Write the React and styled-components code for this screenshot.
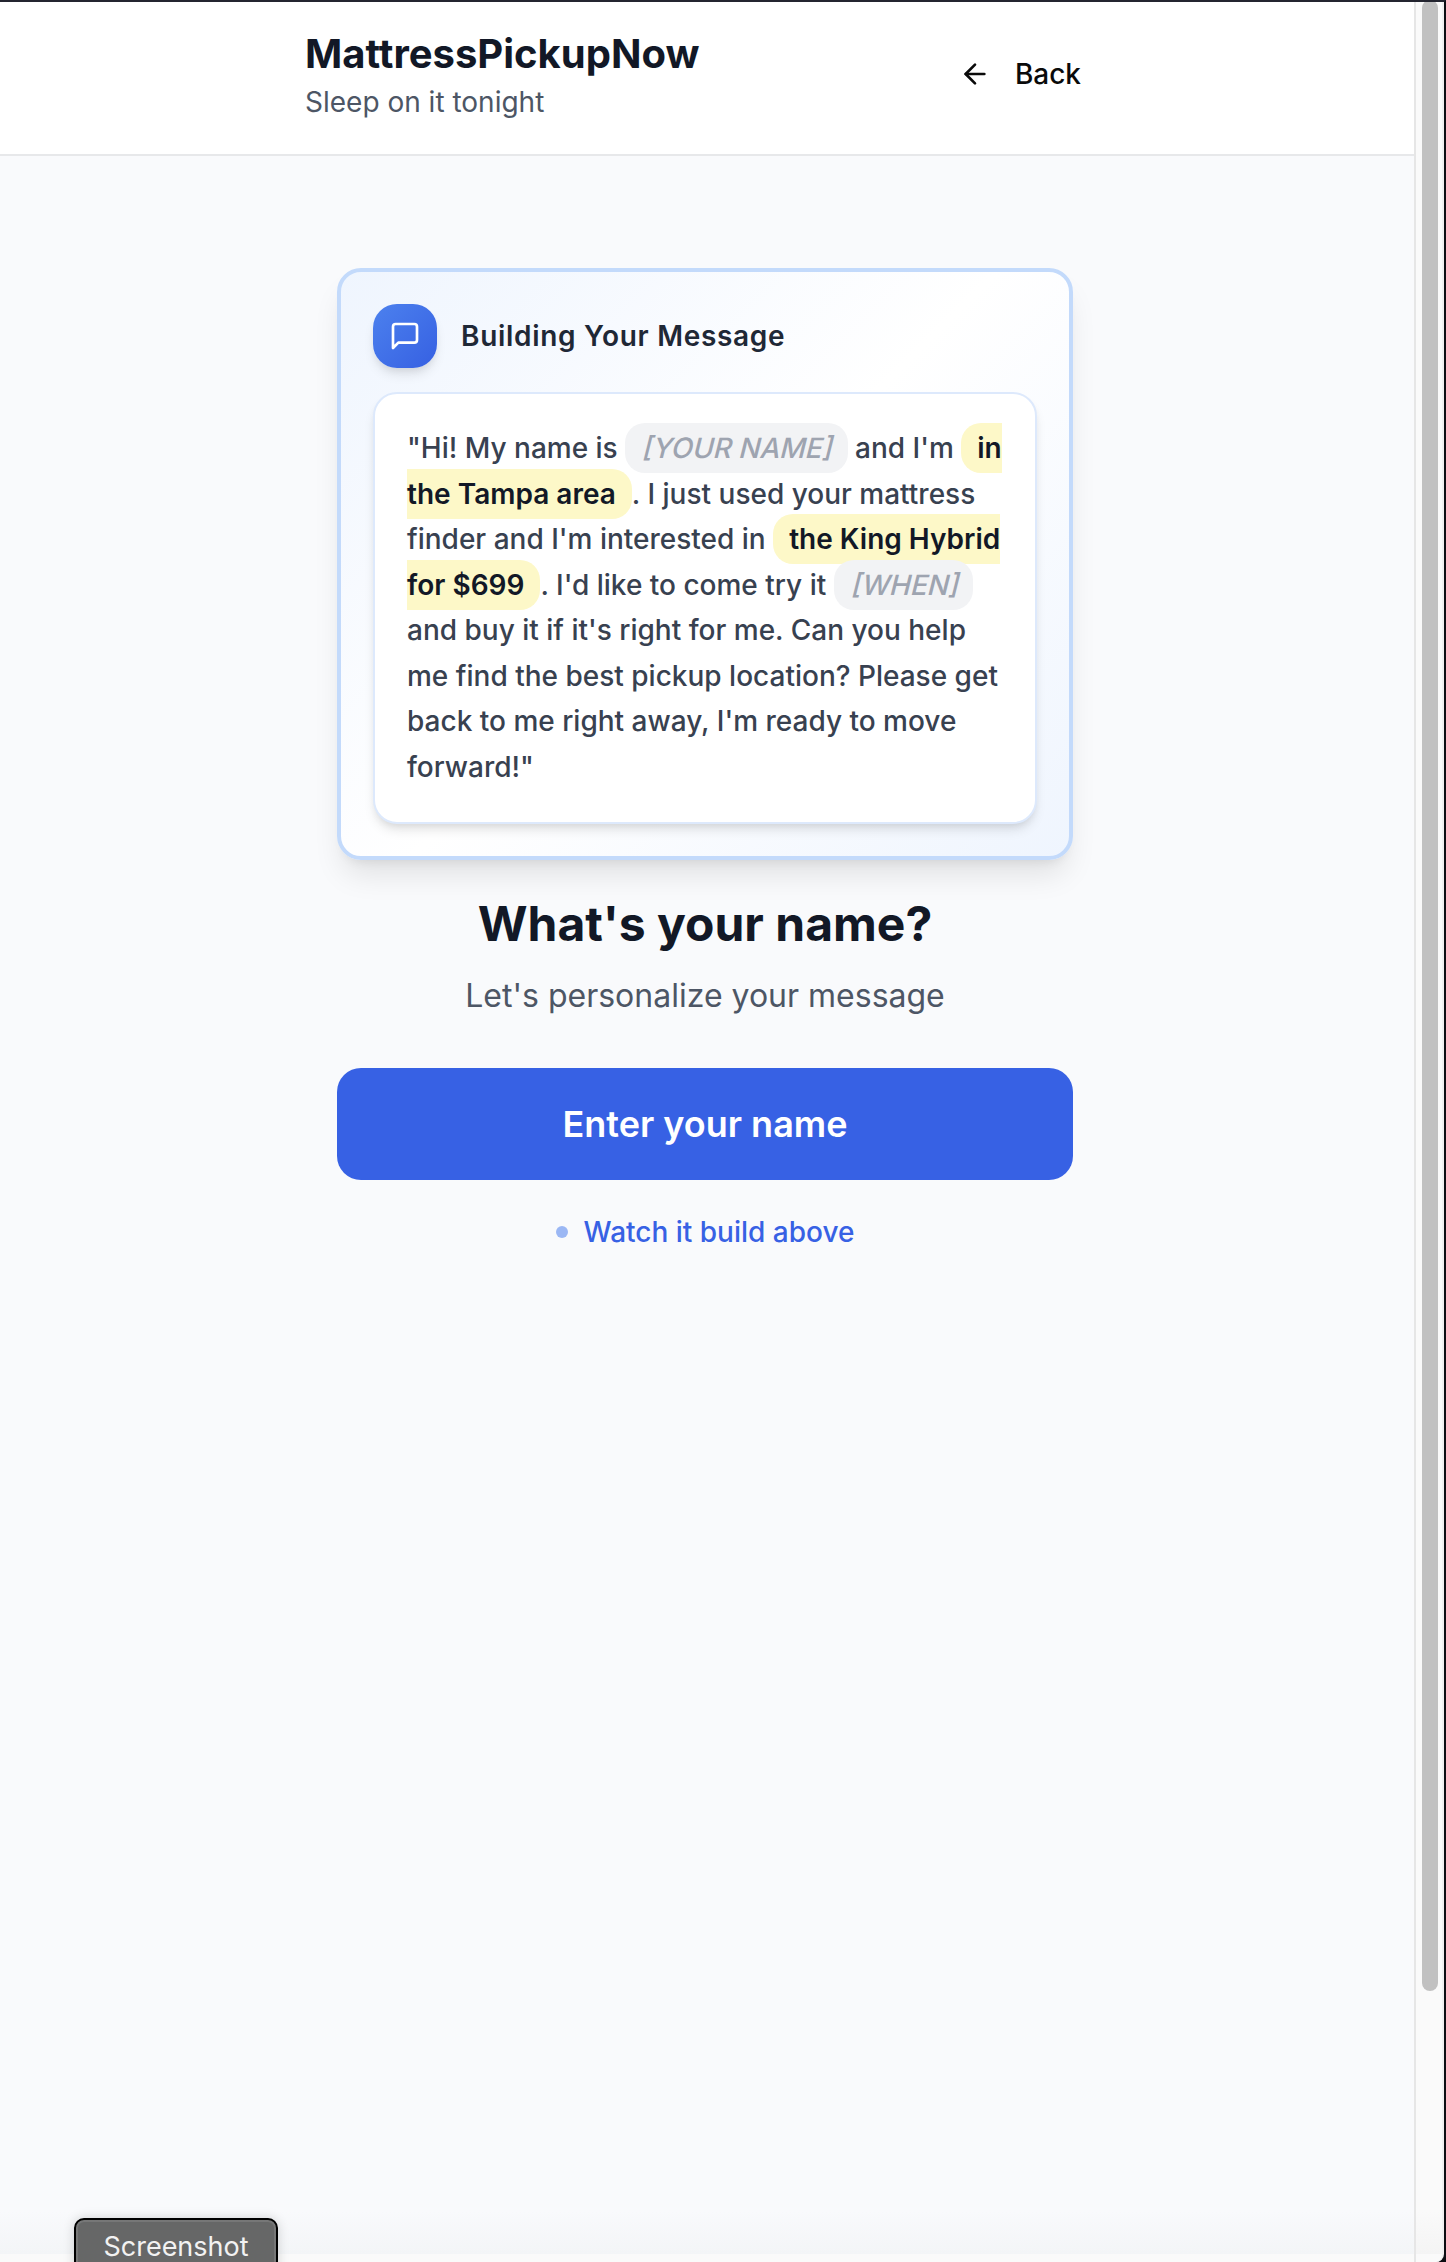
import React from 'react';
import styled, { createGlobalStyle } from 'styled-components';
import { ArrowLeft } from 'lucide-react';

const GlobalStyle = createGlobalStyle`
  *, *::before, *::after { box-sizing: border-box; }
  html, body { margin: 0; padding: 0; overflow: hidden; }
  body {
    font-family: Inter, "Liberation Sans", sans-serif;
    font-optical-sizing: none;
    -webkit-font-smoothing: antialiased;
    background: #f9fafc;
  }
  h1, h2, p { margin: 0; }
  button { font-family: inherit; border: 0; background: none; }
`;

const Frame = styled.div`
  position: relative;
  display: flex;
  width: 1446px;
  height: 2262px;
  overflow: hidden;
  border-top: 2px solid #242530;
  border-right: 2px solid #0c0d12;
  background: #0c0d12;
`;

const Page = styled.div`
  display: flex;
  flex-direction: column;
  width: 1414px;
  background: linear-gradient(to bottom, transparent 2210px, #f3f5f7 2252px, #fafafa 2252px), #f9fafc;
`;

const Header = styled.header`
  height: 154px;
  border-bottom: 2px solid #e7e8ea;
  background: #fff;
`;

const HeaderInner = styled.div`
  display: flex;
  align-items: center;
  justify-content: space-between;
  width: 800px;
  height: 144px;
  margin-left: 305px;
`;

const BrandBlock = styled.div`
  padding-top: 3px;
`;

const Brand = styled.h1`
  font-size: 40px;
  line-height: 50px;
  font-weight: 700;
  color: #121826;
`;

const Tagline = styled.p`
  font-size: 28px;
  line-height: 40px;
  padding-top: 3px;
  color: #4d5665;
`;

const BackButton = styled.button`
  display: flex;
  align-items: center;
  gap: 24px;
  padding: 0 24px;
  font-size: 28px;
  line-height: 40px;
  font-weight: 500;
  color: #0a0a0a;
`;

const Main = styled.main`
  display: flex;
  flex-direction: column;
  align-items: center;
  width: 736px;
  margin: 112px 0 0 337px;
`;

const MessageCard = styled.section`
  width: 736px;
  height: 592px;
  padding: 32px;
  border: 4px solid #c3dafb;
  border-radius: 24px;
  background: linear-gradient(135deg, #eff5fe 0%, #ffffff 50%, #eff5fe 100%);
  box-shadow: 0 20px 30px -6px rgba(0, 0, 0, 0.1), 0 8px 12px -8px rgba(0, 0, 0, 0.1);
`;

const CardHeader = styled.div`
  display: flex;
  align-items: center;
  gap: 24px;
  margin-bottom: 24px;
`;

const IconTile = styled.div`
  display: flex;
  align-items: center;
  justify-content: center;
  width: 64px;
  height: 64px;
  border-radius: 24px;
  color: #fff;
  background: linear-gradient(135deg, #4c81ee, #3660e2);
  box-shadow: 0 8px 12px -2px rgba(0, 0, 0, 0.1), 0 4px 8px -4px rgba(0, 0, 0, 0.1);
`;

const CardTitle = styled.h2`
  font-size: 28px;
  line-height: 40px;
  font-weight: 600;
  letter-spacing: 0.7px;
  color: #1f2836;
`;

const Bubble = styled.div`
  height: 432px;
  padding: 32px;
  border: 2px solid #dde9fc;
  border-radius: 24px;
  background: #fff;
  box-shadow: 0 8px 12px -2px rgba(0, 0, 0, 0.1), 0 4px 8px -4px rgba(0, 0, 0, 0.1);
`;

const Message = styled.p`
  font-size: 28px;
  line-height: 45.5px;
  font-weight: 500;
  color: #384150;
`;

const Token = styled.span`
  padding: 8px 16px;
  border-radius: 20px;
  font-weight: ${(p) => (p.$filled ? 600 : 500)};
  color: ${(p) => (p.$filled ? '#121826' : '#9ea4b0')};
  background: ${(p) => (p.$filled ? '#fdf8c8' : '#f2f3f5')};
`;

const Slanted = styled.span`
  display: inline-block;
  transform: skewX(-14deg);
  transform-origin: 50% 72%;
`;

const Question = styled.h2`
  margin-top: 32px;
  font-size: 48px;
  line-height: 64px;
  font-weight: 700;
  color: #121826;
`;

const Hint = styled.p`
  margin-top: 16px;
  font-size: 32px;
  line-height: 48px;
  color: #4d5665;
`;

const PrimaryButton = styled.button`
  width: 736px;
  height: 112px;
  margin-top: 48px;
  border-radius: 24px;
  font-size: 36px;
  line-height: 56px;
  font-weight: 600;
  color: #fff;
  background: #3761e4;
`;

const Note = styled.div`
  display: flex;
  align-items: center;
  gap: 16px;
  margin-top: 32px;
  font-size: 28px;
  line-height: 40px;
  font-weight: 500;
  color: #3761e4;
`;

const Dot = styled.span`
  width: 12px;
  height: 12px;
  border-radius: 50%;
  background: #9bb7f4;
`;

const ScrollTrack = styled.div`
  width: 30px;
  height: 2260px;
  padding-left: 6px;
  border-left: 2px solid #e6e6e6;
  border-right: 2px solid #f0f0f0;
  border-bottom-right-radius: 8px;
  background: linear-gradient(to bottom, transparent 2210px, #f4f4f4 2252px, #fafafa 2252px), #fafafa;
`;

const ScrollThumb = styled.div`
  width: 16px;
  height: 1991px;
  margin-top: -2px;
  border-radius: 8px;
  background: #c1c1c1;
`;

const Tooltip = styled.div`
  position: absolute;
  left: 74px;
  top: 2216px;
  width: 204px;
  height: 60px;
  padding-top: 8px;
  border: 2px solid #000;
  border-radius: 10px;
  box-shadow: inset 0 0 0 2px #767777, 0 0 12px rgba(0, 0, 0, 0.16);
  background: #666767;
  font-size: 27px;
  line-height: 38px;
  text-align: center;
  color: #f2f2f2;
`;

const MessageIcon = () => (
  <svg
    width="32"
    height="32"
    viewBox="0 0 24 24"
    fill="none"
    stroke="currentColor"
    strokeWidth="2"
    strokeLinecap="round"
    strokeLinejoin="round"
  >
    <path d="M21 15a2 2 0 0 1-2 2H7l-4 4V5a2 2 0 0 1 2-2h14a2 2 0 0 1 2 2z" />
  </svg>
);

const Placeholder = ({ children }) => (
  <Token>
    <Slanted>{children}</Slanted>
  </Token>
);

export default function App() {
  return (
    <>
      <GlobalStyle />
      <Frame>
        <Page>
          <Header>
            <HeaderInner>
              <BrandBlock>
                <Brand>MattressPickupNow</Brand>
                <Tagline>Sleep on it tonight</Tagline>
              </BrandBlock>
              <BackButton>
                <ArrowLeft size={32} strokeWidth={2} />
                Back
              </BackButton>
            </HeaderInner>
          </Header>
          <Main>
            <MessageCard>
              <CardHeader>
                <IconTile>
                  <MessageIcon />
                </IconTile>
                <CardTitle>Building Your Message</CardTitle>
              </CardHeader>
              <Bubble>
                <Message>
                  "Hi! My name is <Placeholder>[YOUR NAME]</Placeholder> and I'm{' '}
                  <Token $filled>in the Tampa area</Token>. I just used your mattress finder and
                  I'm interested in <Token $filled>the King Hybrid for $699</Token>. I'd like to
                  come try it <Placeholder>[WHEN]</Placeholder> and buy it if it's right for me. Can
                  you help me find the best pickup location? Please get back to me right away, I'm
                  ready to move forward!"
                </Message>
              </Bubble>
            </MessageCard>
            <Question>What's your name?</Question>
            <Hint>Let's personalize your message</Hint>
            <PrimaryButton>Enter your name</PrimaryButton>
            <Note>
              <Dot />
              Watch it build above
            </Note>
          </Main>
        </Page>
        <ScrollTrack>
          <ScrollThumb />
        </ScrollTrack>
        <Tooltip>Screenshot</Tooltip>
      </Frame>
    </>
  );
}
